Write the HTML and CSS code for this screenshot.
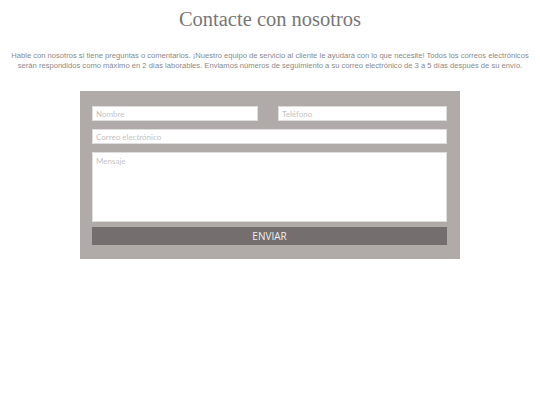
FILE: index.html
```html
<!DOCTYPE html>
<html lang="es">
<head>
  <meta charset="UTF-8">
  <meta name="viewport" content="width=device-width, initial-scale=1.0">
  <title>Contacte con nosotros</title>
  <link rel="stylesheet" href="styles.css">
</head>
<body>
  <div class="contact-page">
    <h1 class="contact-title">Contacte con nosotros</h1>
    <p class="contact-intro">
      Hable con nosotros si tiene preguntas o comentarios. ¡Nuestro equipo de servicio al cliente le ayudará con lo que necesite! Todos los correos electrónicos serán respondidos como máximo en 2 días laborables. Enviamos números de seguimiento a su correo electrónico de 3 a 5 días después de su envío.
    </p>
    <form class="contact-form">
      <div class="form-row">
        <input type="text" class="form-field" placeholder="Nombre">
        <input type="text" class="form-field" placeholder="Teléfono">
      </div>
      <input type="email" class="form-field" placeholder="Correo electrónico">
      <textarea class="form-field form-message" placeholder="Mensaje"></textarea>
      <button type="button" class="form-submit">ENVIAR</button>
    </form>
  </div>
</body>
</html>
```

FILE: styles.css
```css
body {
  margin: 0;
  padding: 0;
  background-color: #ffffff;
  font-family: "Liberation Sans", Arial, sans-serif;
}
.contact-page {
  padding: 8px 6px;
}
.contact-title {
  font-family: "Liberation Serif", "Times New Roman", serif;
  font-weight: normal;
  font-size: 20.5px;
  color: #777777;
  text-align: center;
  margin: 0 0 20px;
}
.contact-intro {
  font-size: 7.6px;
  line-height: 9.5px;
  color: #8a8a8a;
  text-align: center;
  margin: 0 0 21px;
}
.contact-form {
  width: 355px;
  margin: 0 auto;
  padding: 15px 13px 14px 12px;
  background-color: #b0aaa9;
  display: flex;
  flex-direction: column;
  gap: 8px;
}
.form-row {
  display: grid;
  grid-template-columns: 166fr 169fr;
  gap: 20px;
}
.form-row .form-field {
  min-width: 0;
}
.form-field {
  box-sizing: border-box;
  height: 15px;
  margin: 0;
  padding: 0 3px;
  border: 1px solid #dedede;
  background-color: #ffffff;
  font-family: Lato, "Open Sans", sans-serif;
  font-size: 8px;
  color: #555555;
  outline: none;
}
.form-field::placeholder {
  color: #c4c4c4;
}
.form-message {
  height: 70px;
  padding-top: 3px;
  resize: none;
}
.form-submit {
  height: 18px;
  margin-top: -3px;
  border: none;
  padding: 0;
  background-color: #746f6e;
  color: #eeeeee;
  font-family: "Open Sans", sans-serif;
  font-size: 10px;
}
```
